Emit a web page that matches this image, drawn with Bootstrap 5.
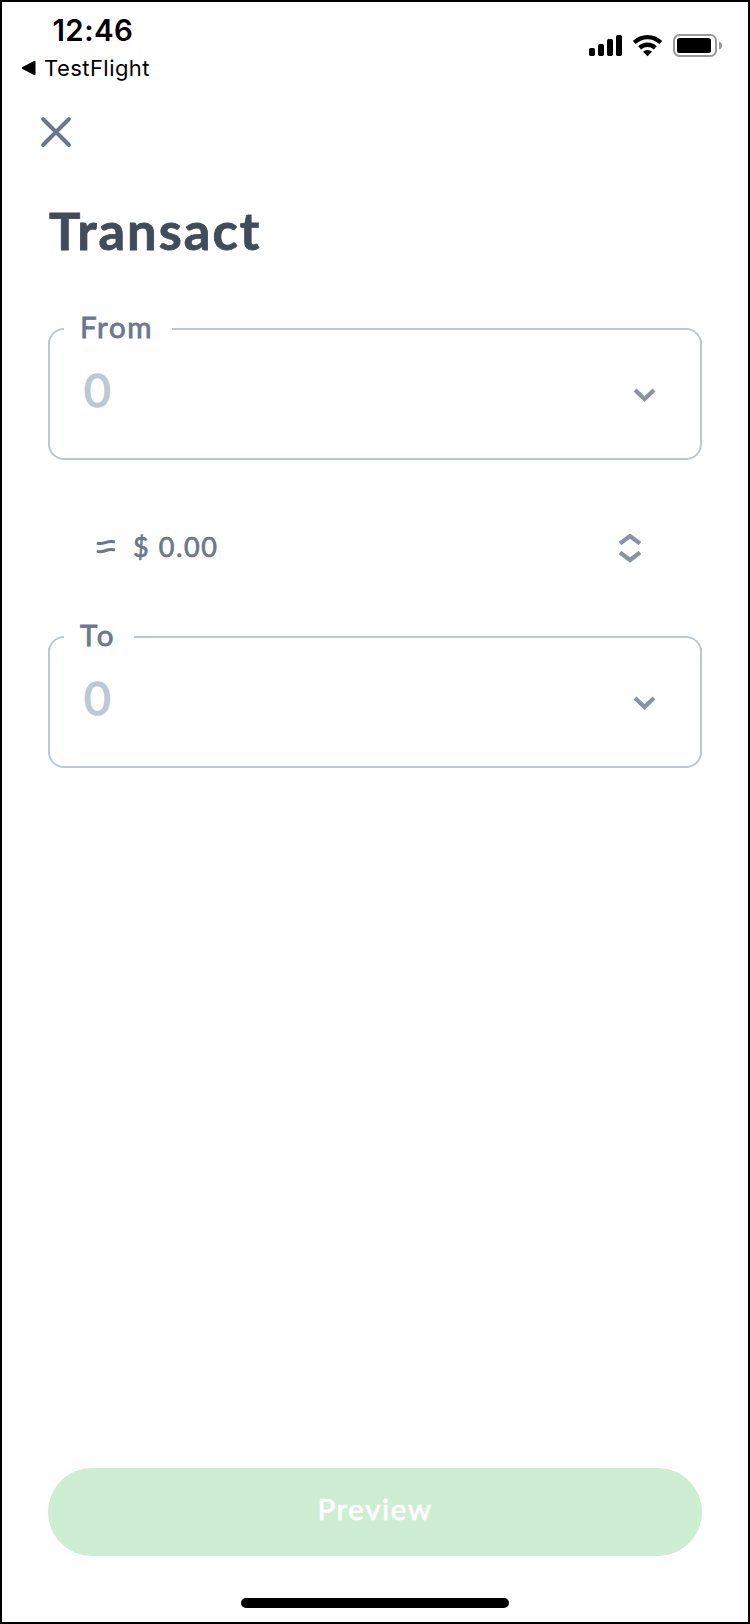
<!DOCTYPE html>
<html lang="en">
<head>
<meta charset="utf-8">
<meta name="viewport" content="width=device-width, initial-scale=1">
<title>Transact</title>
<link href="https://cdn.jsdelivr.net/npm/bootstrap@5.3.0/dist/css/bootstrap.min.css" rel="stylesheet">
<style>
body{background:#fff;font-family:Lato,"Liberation Sans",sans-serif;color:#6a778f}
.phone{width:750px;height:1624px;border:2px solid #000;overflow:hidden}
.phone svg{display:block;flex:none}
.status{height:102px;padding:10px 26px 0 19px;font-family:Inter,"Liberation Sans",sans-serif;color:#000}
.clock{font-size:29.5px;font-weight:600;line-height:36px;padding-left:31.5px;letter-spacing:.4px}
.back-app{font-size:22px;line-height:30px;margin-top:5px;gap:8px;letter-spacing:.45px}
.signals{padding-top:20px}
.close-btn{margin:10px 0 0 36px;width:36px;height:36px}
.screen-title{margin:45px 0 0 47px;font-size:52.5px;line-height:70px;font-weight:700;-webkit-text-stroke:.8px;color:#404b5c;letter-spacing:2px}
.form-area{margin:51px 46px 0}
.amount{width:654px;height:144px}
.frame-top{height:24px;line-height:24px}
.corner{width:16px;height:16px;border:solid #bcc8d6;border-width:2px 0 0 2px;border-top-left-radius:16px}
.corner.end{flex:1;border-width:2px 2px 0 0;border-radius:0 16px 0 0}
.frame-top .corner{margin-top:12px}
.tag{width:108px;padding-left:16px;margin-top:-1px;font-size:29.5px;font-weight:400;-webkit-text-stroke:.8px;letter-spacing:1.7px;white-space:nowrap}
.tag-short{width:70px;letter-spacing:3px}
.field-body{height:120px;border:solid #bcc8d6;border-width:0 2px 2px;border-radius:0 0 16px 16px;padding:0 44px 0 34px}
.zero{margin-top:20px;font-size:46px;line-height:60px;font-weight:400;-webkit-text-stroke:1.4px;color:#bcc8d6}
.chevron{margin-top:48px}
.rate{height:164px;font-size:27px;line-height:36px;-webkit-text-stroke:.7px;letter-spacing:1.6px}
.approx{margin:79px 17px 0 48px}
.swap{margin:73px 60px 0 0}
.preview{width:654px;height:88px;background:#ceeed3!important;border:0;border-radius:44px;color:#fff;font-size:29.5px;-webkit-text-stroke:.7px;letter-spacing:1.6px;line-height:36px;padding:0 0 7px}
.home-bar{width:268px;height:10px;border-radius:5px;background:#000;margin:42px auto 14px}
</style>
</head>
<body>
<main class="phone d-flex flex-column">
  <header class="status d-flex justify-content-between">
    <div>
      <div class="clock">12:46</div>
      <div class="back-app d-flex align-items-center">
        <svg width="15" height="16" viewBox="0 0 15 16"><path d="M1.5 7 13 1Q14.5 .5 14.5 2V14Q14.5 15.500 13 15L1.500 9Q0 8 1.500 7Z"/></svg>
        <span>TestFlight</span>
      </div>
    </div>
    <div class="signals">
      <svg width="134" height="26" viewBox="588 32 134 26">
        <rect x="589" y="48" width="6" height="8" rx="1.7"/><rect x="598" y="44" width="6" height="12" rx="1.7"/><rect x="607" y="39" width="6" height="17" rx="1.7"/><rect x="616" y="35" width="6" height="21" rx="1.7"/>
        <g fill="none" stroke="#000" stroke-width="4.300"><path d="M634.300 42.500a18.800 18.800 0 0 1 26.400 0"/><path d="M639.700 47.800a11.500 11.500 0 0 1 15.600 0"/></g>
        <path d="M643 51.800a6.600 6.600 0 0 1 9 0L647.500 56.200Z"/>
        <rect x="674" y="35" width="42" height="21" rx="5.500" fill="none" stroke="#999" stroke-width="2"/>
        <rect x="677" y="38" width="34" height="15" rx="2.500"/><path d="M719 41.500q3 1 3 4t-3 4Z" fill="#999"/>
      </svg>
    </div>
  </header>
  <button class="close-btn btn p-0 border-0" aria-label="Close"><svg width="36" height="36" viewBox="0 0 36 36"><path d="M5 5 31 31M31 5 5 31" fill="none" stroke="#6a778f" stroke-width="3.900" stroke-linecap="round"/></svg></button>
  <h1 class="screen-title mb-0">Transact</h1>
  <section class="form-area">
    <div class="amount">
      <div class="frame-top d-flex"><i class="corner"></i><span class="tag">From</span><i class="corner end"></i></div>
      <div class="field-body d-flex justify-content-between"><span class="zero">0</span>
        <svg class="chevron" width="23" height="15" viewBox="0 0 23 15"><path d="M2 2 11.500 11 21 2" fill="none" stroke="#8793a7" stroke-width="4.300"/></svg></div>
    </div>
    <div class="rate d-flex">
      <svg class="approx" width="20" height="16" viewBox="0 0 20 16"><path d="M1 3.800C7 6.800 11 .5 19 3M1 12C7 15 11 8.500 19 11" fill="none" stroke="#6a778f" stroke-width="3"/></svg>
      <span style="margin-top:69px">$ 0.00</span>
      <svg class="swap ms-auto" width="24" height="30" viewBox="0 0 24 30"><path d="M2 10.500 12 3 22 10.500M2 19.500 12 27 22 19.500" fill="none" stroke="#8793a7" stroke-width="4.200"/></svg>
    </div>
    <div class="amount">
      <div class="frame-top d-flex"><i class="corner"></i><span class="tag tag-short">To</span><i class="corner end"></i></div>
      <div class="field-body d-flex justify-content-between"><span class="zero">0</span>
        <svg class="chevron" width="23" height="15" viewBox="0 0 23 15"><path d="M2 2 11.500 11 21 2" fill="none" stroke="#8793a7" stroke-width="4.300"/></svg></div>
    </div>
  </section>
  <footer class="mt-auto d-flex justify-content-center">
    <button class="preview btn">Preview</button>
  </footer>
  <div class="home-bar flex-shrink-0"></div>
</main>
<script src="https://cdn.jsdelivr.net/npm/bootstrap@5.3.0/dist/js/bootstrap.bundle.min.js"></script>
</body>
</html>
